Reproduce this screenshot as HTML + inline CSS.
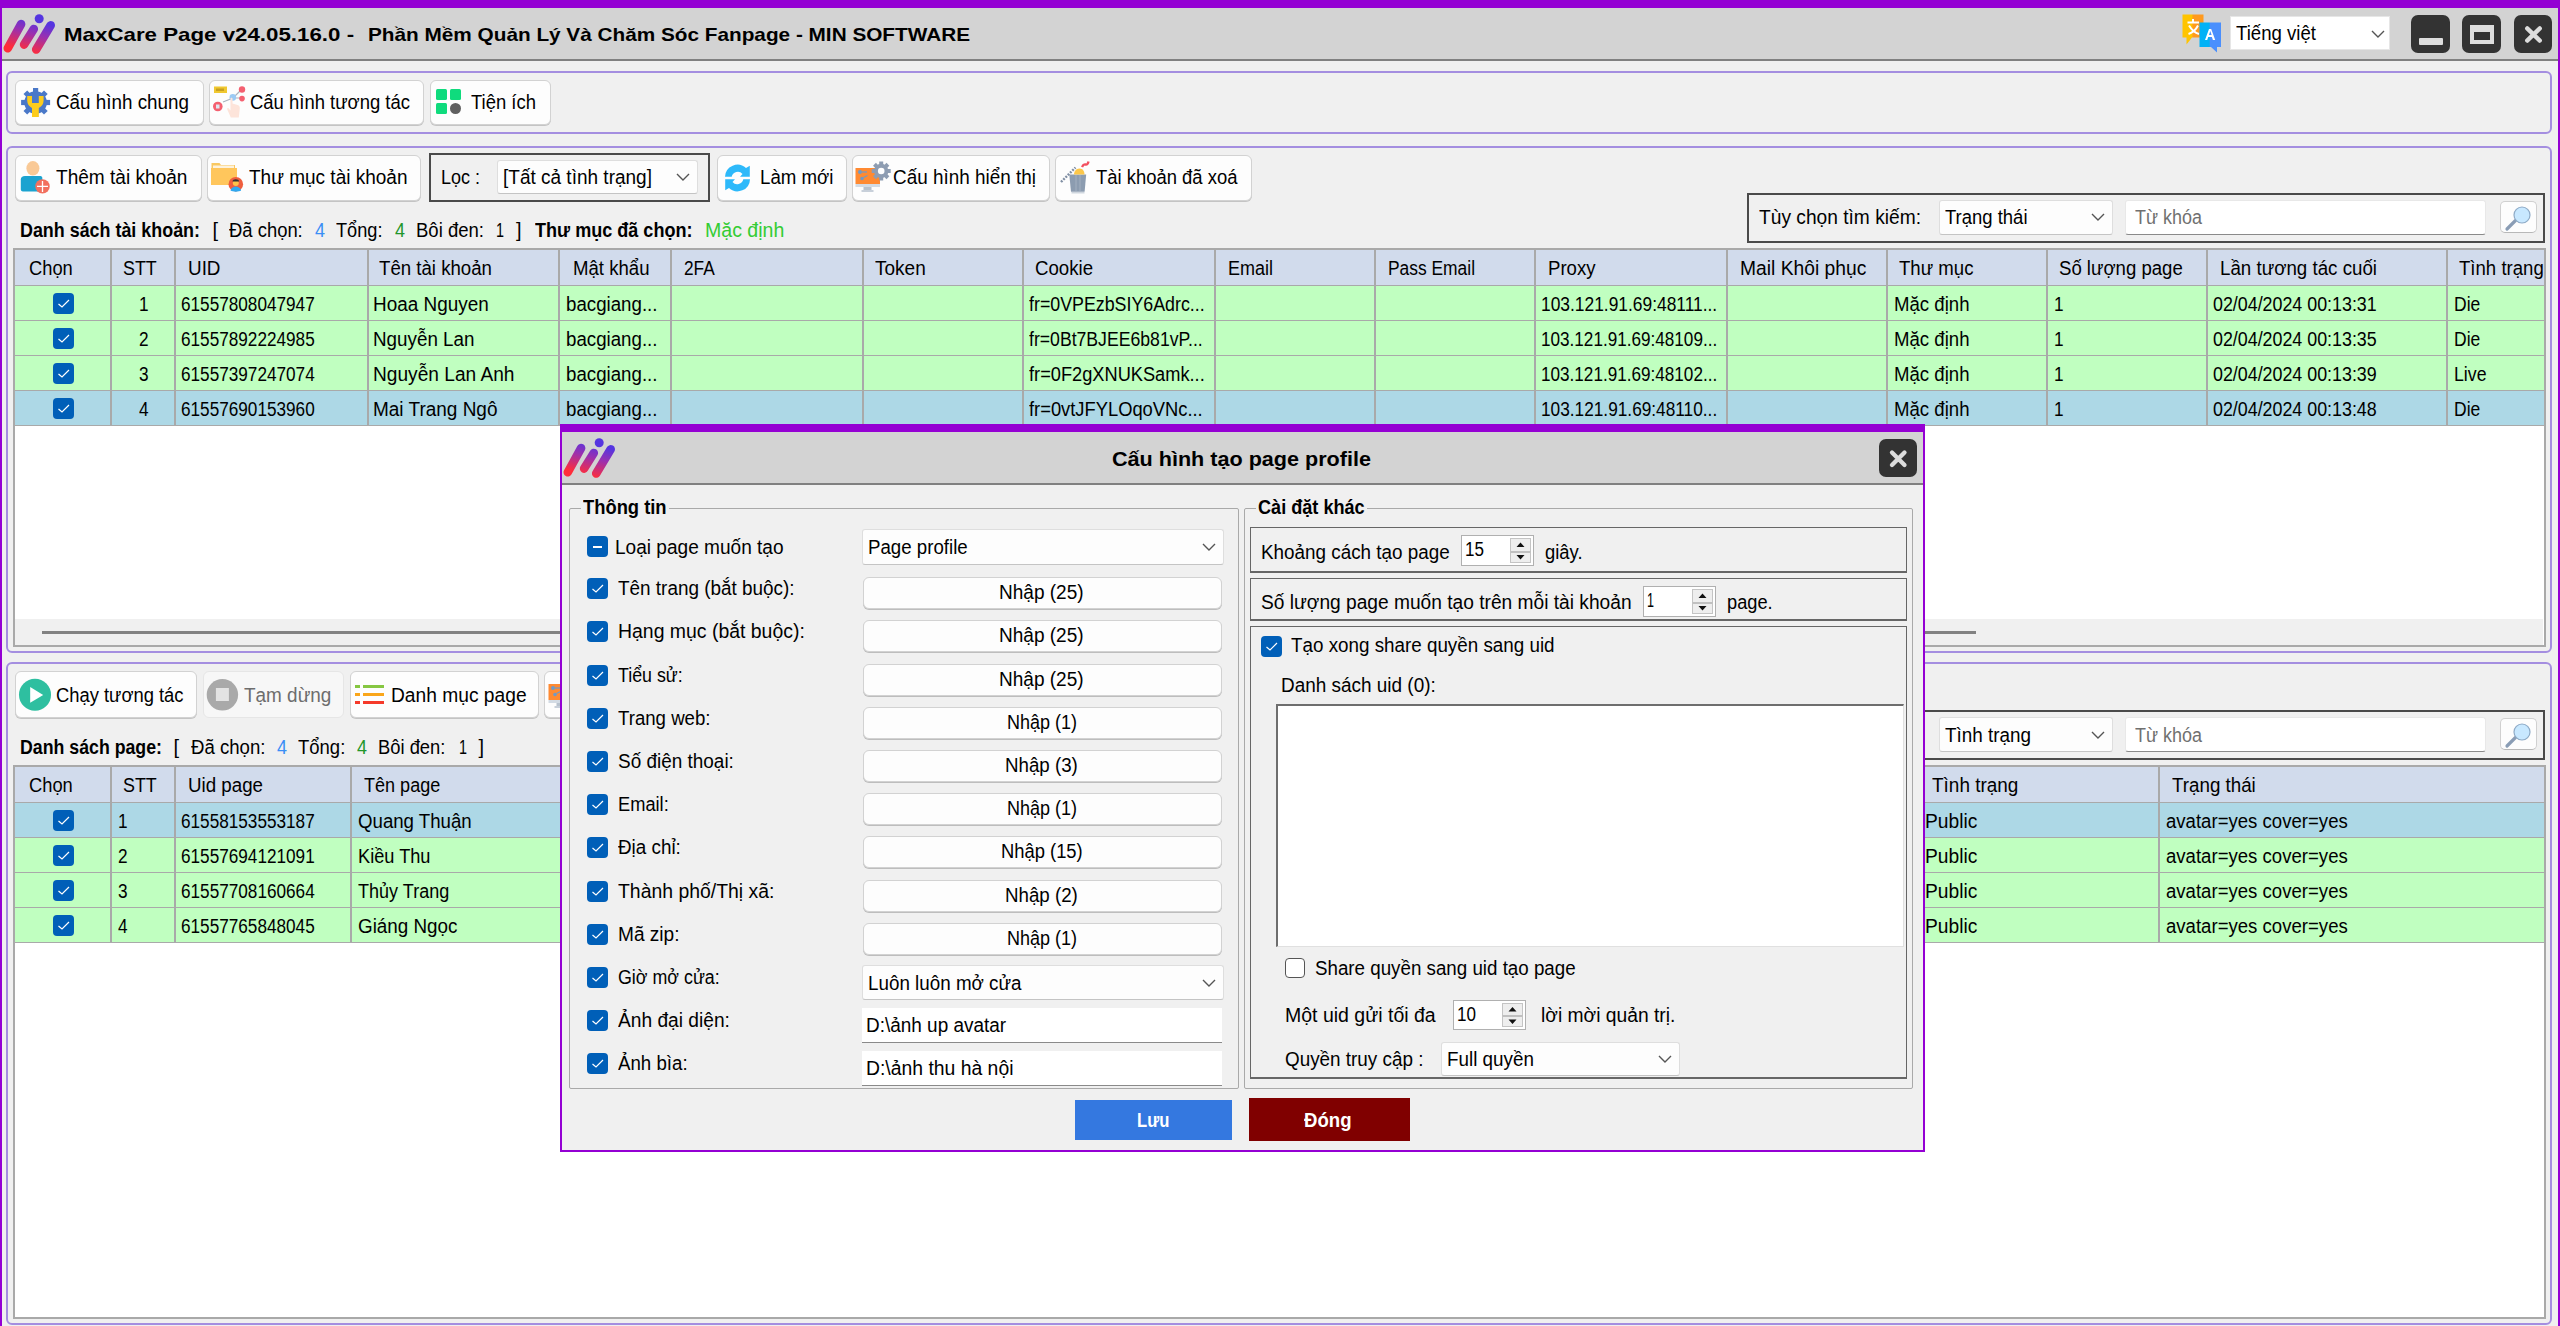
<!DOCTYPE html>
<html><head><meta charset="utf-8"><title>MaxCare Page</title>
<style>
html,body{margin:0;padding:0;width:2560px;height:1326px;overflow:hidden;background:#f0f0f0;position:relative}
body>div,body>svg{position:absolute}
.t{position:absolute;white-space:pre;line-height:1;font-family:"Liberation Sans",sans-serif;transform-origin:0 0}
</style></head><body>
<div style="left:2px;top:8px;width:2556px;height:51px;background:#d3d3d3"></div>
<div style="left:2px;top:59px;width:2556px;height:2px;background:#808080"></div>
<div style="left:0px;top:0px;width:2560px;height:8px;background:#9400d3"></div>
<div style="left:0px;top:0px;width:2px;height:1326px;background:#9400d3"></div>
<div style="left:2558px;top:0px;width:2px;height:1326px;background:#9400d3"></div>
<svg style="position:absolute;left:2px;top:14px;overflow:visible" width="54" height="40" viewBox="0 0 54 40"><defs><linearGradient id="lg1" gradientUnits="userSpaceOnUse" x1="20" y1="38" x2="30" y2="5"><stop offset="0.05" stop-color="#ff2d3a"/><stop offset="0.6" stop-color="#9a30b0"/><stop offset="1" stop-color="#5535e0"/></linearGradient></defs><g stroke="url(#lg1)" stroke-width="8.6" stroke-linecap="round" fill="none"><line x1="5.8" y1="34.3" x2="19.1" y2="10.1"/><line x1="22.1" y1="30.6" x2="31.8" y2="15"/><line x1="34.2" y1="35.5" x2="48.7" y2="11.3"/></g><circle cx="37.2" cy="4.7" r="4.5" fill="#5535e0"/></svg>
<div class="t" style="left:64.00px;top:24.85px;font-size:19px;font-weight:bold;color:#000;transform:scaleX(1.1736);">MaxCare Page v24.05.16.0 -</div>
<div class="t" style="left:368.00px;top:24.85px;font-size:19px;font-weight:bold;color:#000;transform:scaleX(1.0924);">Phần Mềm Quản Lý Và Chăm Sóc Fanpage - MIN SOFTWARE</div>
<svg style="position:absolute;left:2182px;top:14px;overflow:visible" width="40" height="40" viewBox="0 0 40 40"><defs><linearGradient id="tg1" x1="0" x2="1"><stop offset="0.45" stop-color="#ffc400"/><stop offset="0.5" stop-color="#ff9a1e"/></linearGradient><linearGradient id="tg2" x1="0" x2="1"><stop offset="0.45" stop-color="#00b2f6"/><stop offset="0.5" stop-color="#4a8ffd"/></linearGradient></defs><path d="M0.5 0.5h21v23h-11.5l-5.5 7v-7h-4z" fill="url(#tg1)"/><path d="M5.5 8.5h11.5M11 5v3.5M7 11.5c3 5 6 7.5 10 8.5M16 11.5c-2 4-5 7-9.5 8.5" stroke="#fff" stroke-width="2" fill="none"/><path d="M17.5 8.5h21.5v24.5h-4v5.5l-6-5.5h-11.5z" fill="url(#tg2)"/><path d="M23 26l4-11h2.2l4 11h-2.3l-1-3h-3.7l-1 3zM27 21h2.6l-1.3-4z" fill="#fff"/></svg>
<div style="left:2230px;top:16px;width:160px;height:34px;background:#fff;border:1px solid #e6e6e6;box-sizing:border-box"></div>
<div class="t" style="left:2236.25px;top:22.50px;font-size:20px;color:#000;transform:scaleX(0.9304);">Tiếng việt</div>
<svg style="position:absolute;left:2370px;top:28px;overflow:visible" width="16" height="12" viewBox="0 0 16 12"><path d="M2 3l6 6 6-6" stroke="#555" stroke-width="1.4" fill="none"/></svg>
<div style="left:2411px;top:15px;width:39px;height:38px;background:#333;border-radius:7px"></div>
<div style="left:2419px;top:38px;width:24px;height:7px;background:#ddd;border-radius:1px"></div>
<div style="left:2462px;top:15px;width:39px;height:38px;background:#333;border-radius:7px"></div>
<div style="left:2470px;top:25px;width:24px;height:19px;box-sizing:border-box;border:4px solid #ddd;border-top-width:7px"></div>
<div style="left:2514px;top:15px;width:38px;height:38px;background:#333;border-radius:7px"></div>
<svg style="position:absolute;left:2514px;top:15px;overflow:visible" width="38" height="38" viewBox="0 0 38 38"><path d="M13.2 13.4L25.8 25.6M25.8 13.4L13.2 25.6" stroke="#dcdcdc" stroke-width="4.3" stroke-linecap="round"/></svg>
<div style="left:6px;top:71px;width:2546px;height:63px;box-sizing:border-box;border:2px solid #a48ee0;border-radius:6px"></div>
<div style="left:15px;top:80px;width:189px;height:45px;background:#fdfdfd;border:1px solid #d2d2d2;box-sizing:border-box;border-radius:6px;box-shadow:0 1px 0 #c4c4c4;"></div>
<div style="left:209px;top:80px;width:215px;height:45px;background:#fdfdfd;border:1px solid #d2d2d2;box-sizing:border-box;border-radius:6px;box-shadow:0 1px 0 #c4c4c4;"></div>
<div style="left:430px;top:80px;width:121px;height:45px;background:#fdfdfd;border:1px solid #d2d2d2;box-sizing:border-box;border-radius:6px;box-shadow:0 1px 0 #c4c4c4;"></div>
<svg style="position:absolute;left:21px;top:88px;overflow:visible" width="30" height="30" viewBox="0 0 30 30"><g fill="#4a78c8"><circle cx="14.6" cy="14.5" r="11.3"/><rect x="12" y="0" width="5.2" height="6" transform="rotate(0 14.6 14.5)"/><rect x="12" y="0" width="5.2" height="6" transform="rotate(45 14.6 14.5)"/><rect x="12" y="0" width="5.2" height="6" transform="rotate(90 14.6 14.5)"/><rect x="12" y="0" width="5.2" height="6" transform="rotate(135 14.6 14.5)"/><rect x="12" y="0" width="5.2" height="6" transform="rotate(180 14.6 14.5)"/><rect x="12" y="0" width="5.2" height="6" transform="rotate(225 14.6 14.5)"/><rect x="12" y="0" width="5.2" height="6" transform="rotate(270 14.6 14.5)"/><rect x="12" y="0" width="5.2" height="6" transform="rotate(315 14.6 14.5)"/></g><path d="M6.2 8v4.5a8.4 8.4 0 0 0 4.8 7.4v9.1h6.8v-9.1a8.4 8.4 0 0 0 4.8-7.4v-4.5h-4.8v7h-6.8v-7z" fill="#fccc1c"/></svg>
<svg style="position:absolute;left:212px;top:85px;overflow:visible" width="34" height="34" viewBox="0 0 34 34"><path d="M11 17l10-4M21 13l9-9M21 13l9 0" stroke="#a9b3be" stroke-width="1.2" fill="none"/><rect x="2" y="1.5" width="13" height="6.5" fill="#f0c830"/><rect x="4" y="3.5" width="8" height="2.5" fill="#c8a020"/><circle cx="5.8" cy="21.5" r="4.8" fill="#f46070"/><rect x="4" y="19.5" width="3.5" height="4" fill="#dfe6f0"/><circle cx="30" cy="4.5" r="3.2" fill="#f46070"/><circle cx="30" cy="13.6" r="2.8" fill="#f46070"/><circle cx="20.8" cy="12.4" r="3.3" fill="#9ccaf4"/><path d="M18.5 13.5c0-1 2-1 2 0v5l5 1.5c2 0.5 2.5 2 2.3 3.5l-1 9h-8l-3.5-8c-0.5-1 0.5-2 1.5-1l1.7 2z" fill="#fde4da"/></svg>
<svg style="position:absolute;left:436px;top:89px;overflow:visible" width="30" height="30" viewBox="0 0 30 30"><rect x="0" y="0" width="11" height="11" rx="1.5" fill="#0fdb7d"/><rect x="14" y="0" width="11" height="11" rx="1.5" fill="#0fdb7d"/><rect x="0" y="14" width="11" height="11" rx="1.5" fill="#0fdb7d"/><circle cx="19.5" cy="19.5" r="5.5" fill="#606060"/></svg>
<div class="t" style="left:56.00px;top:91.75px;font-size:20px;color:#000;transform:scaleX(0.9416);">Cấu hình chung</div>
<div class="t" style="left:250.00px;top:91.75px;font-size:20px;color:#000;transform:scaleX(0.9232);">Cấu hình tương tác</div>
<div class="t" style="left:470.75px;top:91.75px;font-size:20px;color:#000;transform:scaleX(0.9230);">Tiện ích</div>
<div style="left:6px;top:146px;width:2546px;height:507px;box-sizing:border-box;border:2px solid #a48ee0;border-radius:6px"></div>
<div style="left:15px;top:154.5px;width:187px;height:46.5px;background:#fdfdfd;border:1px solid #d2d2d2;box-sizing:border-box;border-radius:6px;box-shadow:0 1px 0 #c4c4c4;"></div>
<div style="left:207px;top:154.5px;width:214px;height:46.5px;background:#fdfdfd;border:1px solid #d2d2d2;box-sizing:border-box;border-radius:6px;box-shadow:0 1px 0 #c4c4c4;"></div>
<div style="left:429px;top:153px;width:281px;height:49px;box-sizing:border-box;border:2px solid #4a4a4a"></div>
<div style="left:497px;top:160px;width:201px;height:34px;background:#fdfdfd;border:1px solid #dedede;box-sizing:border-box;border-radius:3px;border-bottom-color:#c4c4c4"></div>
<div class="t" style="left:503.00px;top:167.00px;font-size:20px;color:#000;transform:scaleX(0.9502);">[Tất cả tình trạng]</div>
<svg style="position:absolute;left:675px;top:171.0px;overflow:visible" width="16" height="12" viewBox="0 0 16 12"><path d="M2 3l6 6 6-6" stroke="#555" stroke-width="1.4" fill="none"/></svg>
<div style="left:717px;top:154.5px;width:130px;height:46.5px;background:#fdfdfd;border:1px solid #d2d2d2;box-sizing:border-box;border-radius:6px;box-shadow:0 1px 0 #c4c4c4;"></div>
<div style="left:852px;top:154.5px;width:198px;height:46.5px;background:#fdfdfd;border:1px solid #d2d2d2;box-sizing:border-box;border-radius:6px;box-shadow:0 1px 0 #c4c4c4;"></div>
<div style="left:1055px;top:154.5px;width:197px;height:46.5px;background:#fdfdfd;border:1px solid #d2d2d2;box-sizing:border-box;border-radius:6px;box-shadow:0 1px 0 #c4c4c4;"></div>
<div class="t" style="left:56.00px;top:167.00px;font-size:20px;color:#000;transform:scaleX(0.9538);">Thêm tài khoản</div>
<div class="t" style="left:249.00px;top:167.00px;font-size:20px;color:#000;transform:scaleX(0.9501);">Thư mục tài khoản</div>
<div class="t" style="left:441.00px;top:167.00px;font-size:20px;color:#000;transform:scaleX(0.8991);">Lọc :</div>
<div class="t" style="left:759.50px;top:167.00px;font-size:20px;color:#000;transform:scaleX(0.9343);">Làm mới</div>
<div class="t" style="left:893.00px;top:167.00px;font-size:20px;color:#000;transform:scaleX(0.9455);">Cấu hình hiển thị</div>
<div class="t" style="left:1096.00px;top:167.00px;font-size:20px;color:#000;transform:scaleX(0.9220);">Tài khoản đã xoá</div>
<svg style="position:absolute;left:16px;top:158px;overflow:visible" width="40" height="40" viewBox="0 0 40 40"><ellipse cx="16.9" cy="10.3" rx="6.5" ry="7.3" fill="#f9c996"/><path d="M9 18h15.5c1.2 0 1.8 1 1.8 2v13.5h-19.5c-1 0-2-1-2-2v-10c0-2 1.5-3.5 4.2-3.5z" fill="#1ba3d0"/><circle cx="26.5" cy="28.4" r="7.2" fill="#f2705e"/><path d="M26.5 23v11M21 28.4h11" stroke="#fff" stroke-width="1.3"/></svg>
<svg style="position:absolute;left:208px;top:158px;overflow:visible" width="40" height="40" viewBox="0 0 40 40"><path d="M3.5 5h8l1.5 2h14v4h-23.5z" fill="#f9c862"/><rect x="5" y="7.5" width="21" height="4" fill="#fdf2dc"/><rect x="3" y="10" width="26" height="17" fill="#ffc65c"/><circle cx="27.8" cy="26.2" r="7.3" fill="#ef5e3e"/><circle cx="27.8" cy="25" r="3" fill="#fcc24a"/><path d="M24.5 23.5c0-3 6.6-3 6.6 0z" fill="#333"/><path d="M22.5 32.5c1-3 3-4 5.3-4s4.3 1 5.3 4c-2 1.5-8.6 1.5-10.6 0z" fill="#2fa8f0"/></svg>
<svg style="position:absolute;left:718px;top:158px;overflow:visible" width="40" height="40" viewBox="0 0 40 40"><path d="M7 18.8a12.5 12.5 0 0 1 21-8.8l3.8-2.2v11h-9.8l2.5-2.8a6.2 6.2 0 0 0-10.8 2.8z" fill="#2db9fa"/><path d="M32 21.2a12.5 12.5 0 0 1-21 8.8l-3.8 2.2v-11h9.8l-2.5 2.8a6.2 6.2 0 0 0 10.8-2.8z" fill="#2db9fa"/></svg>
<svg style="position:absolute;left:855px;top:156px;overflow:visible" width="40" height="40" viewBox="0 0 40 40"><rect x="0.5" y="12" width="24.5" height="16" fill="#ff8a32"/><rect x="0.5" y="28" width="24.5" height="3" fill="#d3dbe4"/><rect x="8.5" y="31" width="8" height="3" fill="#b8c2ce"/><rect x="6.5" y="34" width="12" height="2" fill="#c8d0da"/><circle cx="5" cy="16" r="2" fill="#6f9ac8"/><path d="M7 16h5" stroke="#6f9ac8" stroke-width="1.2"/><circle cx="7" cy="22.5" r="1.8" fill="#6f9ac8"/><path d="M8.5 21.5l4-2" stroke="#6f9ac8" stroke-width="1.2"/><g fill="#8e9db2"><rect x="24.2" y="5.5" width="4" height="5" transform="rotate(0 26.2 15)"/><rect x="24.2" y="5.5" width="4" height="5" transform="rotate(45 26.2 15)"/><rect x="24.2" y="5.5" width="4" height="5" transform="rotate(90 26.2 15)"/><rect x="24.2" y="5.5" width="4" height="5" transform="rotate(135 26.2 15)"/><rect x="24.2" y="5.5" width="4" height="5" transform="rotate(180 26.2 15)"/><rect x="24.2" y="5.5" width="4" height="5" transform="rotate(225 26.2 15)"/><rect x="24.2" y="5.5" width="4" height="5" transform="rotate(270 26.2 15)"/><rect x="24.2" y="5.5" width="4" height="5" transform="rotate(315 26.2 15)"/><circle cx="26.2" cy="15" r="7.2"/></g><circle cx="26.2" cy="15" r="3.3" fill="#fff"/></svg>
<svg style="position:absolute;left:1056px;top:156px;overflow:visible" width="44" height="44" viewBox="0 0 44 44"><path d="M13.3 18.5h16.9l-1.6 17.3h-13.6z" fill="#8c9cb0"/><path d="M15.5 36h13v1.5h-13z" fill="#cfd6de"/><path d="M20 19v16M24 19v16" stroke="#a3b0c0" stroke-width="1"/><path d="M5 26l14.5-14.5" stroke="#7f8ea3" stroke-width="2.4" stroke-dasharray="2 1.2"/><path d="M18 18.5c0-3 2-6 5.5-6s5 3 5 6z" fill="#fcc74a"/><path d="M26 11c1-2 2-3 3.5-2.5s2.5-1 3-3" stroke="#f25060" stroke-width="2.4" fill="none"/></svg>
<div class="t" style="left:20.00px;top:219.60px;font-size:20px;font-weight:bold;color:#000;transform:scaleX(0.8947);">Danh sách tài khoản:</div>
<div class="t" style="left:212.50px;top:219.60px;font-size:20px;color:#000;">[</div>
<div class="t" style="left:228.75px;top:219.60px;font-size:20px;color:#000;transform:scaleX(0.9212);">Đã chọn:</div>
<div class="t" style="left:315.00px;top:219.60px;font-size:20px;color:#3a8ef6;transform:scaleX(0.8989);">4</div>
<div class="t" style="left:336.00px;top:219.60px;font-size:20px;color:#000;transform:scaleX(0.9090);">Tổng:</div>
<div class="t" style="left:395.00px;top:219.60px;font-size:20px;color:#22962a;transform:scaleX(0.8989);">4</div>
<div class="t" style="left:416.00px;top:219.60px;font-size:20px;color:#000;transform:scaleX(0.9264);">Bôi đen:</div>
<div class="t" style="left:496.00px;top:219.60px;font-size:20px;color:#000;transform:scaleX(0.7191);">1</div>
<div class="t" style="left:516.00px;top:219.60px;font-size:20px;color:#000;">]</div>
<div class="t" style="left:535.00px;top:219.60px;font-size:20px;font-weight:bold;color:#000;transform:scaleX(0.9025);">Thư mục đã chọn:</div>
<div class="t" style="left:704.50px;top:219.60px;font-size:20px;color:#33cc33;transform:scaleX(0.9765);">Mặc định</div>
<div style="left:1747px;top:192.5px;width:798px;height:50px;box-sizing:border-box;border:2px solid #4a4a4a"></div>
<div style="left:1939px;top:199.5px;width:174px;height:35px;background:#fdfdfd;border:1px solid #dedede;box-sizing:border-box;border-radius:3px;border-bottom-color:#c4c4c4"></div>
<div class="t" style="left:1944.50px;top:207.00px;font-size:20px;color:#000;transform:scaleX(0.9236);">Trạng thái</div>
<svg style="position:absolute;left:2090px;top:211.0px;overflow:visible" width="16" height="12" viewBox="0 0 16 12"><path d="M2 3l6 6 6-6" stroke="#555" stroke-width="1.4" fill="none"/></svg>
<div style="left:2125px;top:199.5px;width:361px;height:35px;background:#fff;border:1px solid #e8e8e8;box-sizing:border-box;border-radius:3px;border-bottom:1.5px solid #8a8a8a"></div>
<div class="t" style="left:2135.00px;top:207.00px;font-size:20px;color:#707070;transform:scaleX(0.8988);">Từ khóa</div>
<div style="left:2500px;top:200.5px;width:37px;height:32px;background:#fdfdfd;border:1.5px solid #d0d0d0;box-sizing:border-box;border-radius:5px;border-bottom-color:#b8b8b8"></div>
<svg style="position:absolute;left:2500px;top:200.5px;overflow:visible" width="37" height="32" viewBox="0 0 37 32"><path d="M7 28l8.5-8.5" stroke="#8a9db5" stroke-width="3.2" stroke-linecap="round"/><circle cx="22" cy="14" r="8" fill="#c8e8ff" stroke="#8eaac6" stroke-width="1.2"/></svg>
<div class="t" style="left:1758.75px;top:207.00px;font-size:20px;color:#000;transform:scaleX(0.9588);">Tùy chọn tìm kiếm:</div>
<div style="left:13px;top:248px;width:2533px;height:399px;background:#fff;box-sizing:border-box;border:2px solid #a9a9a9"></div>
<div style="left:15px;top:250px;width:2529px;height:34.5px;background:#d1dbec"></div>
<div style="left:15px;top:284.5px;width:2529px;height:1.5px;background:#a9a9a9"></div>
<div style="left:15px;top:286px;width:2529px;height:35px;background:#c0ffc0"></div>
<div style="left:15px;top:319.5px;width:2529px;height:1.8px;background:#a9a9a9"></div>
<div style="left:15px;top:321px;width:2529px;height:35px;background:#c0ffc0"></div>
<div style="left:15px;top:354.5px;width:2529px;height:1.8px;background:#a9a9a9"></div>
<div style="left:15px;top:356px;width:2529px;height:35px;background:#c0ffc0"></div>
<div style="left:15px;top:389.5px;width:2529px;height:1.8px;background:#a9a9a9"></div>
<div style="left:15px;top:391px;width:2529px;height:35px;background:#add8e6"></div>
<div style="left:15px;top:424.5px;width:2529px;height:1.8px;background:#a9a9a9"></div>
<div style="left:110px;top:250px;width:2px;height:176px;background:#a9a9a9"></div>
<div style="left:174px;top:250px;width:2px;height:176px;background:#a9a9a9"></div>
<div style="left:366.5px;top:250px;width:2px;height:176px;background:#a9a9a9"></div>
<div style="left:558px;top:250px;width:2px;height:176px;background:#a9a9a9"></div>
<div style="left:670px;top:250px;width:2px;height:176px;background:#a9a9a9"></div>
<div style="left:862px;top:250px;width:2px;height:176px;background:#a9a9a9"></div>
<div style="left:1022px;top:250px;width:2px;height:176px;background:#a9a9a9"></div>
<div style="left:1214px;top:250px;width:2px;height:176px;background:#a9a9a9"></div>
<div style="left:1374px;top:250px;width:2px;height:176px;background:#a9a9a9"></div>
<div style="left:1534px;top:250px;width:2px;height:176px;background:#a9a9a9"></div>
<div style="left:1726px;top:250px;width:2px;height:176px;background:#a9a9a9"></div>
<div style="left:1886px;top:250px;width:2px;height:176px;background:#a9a9a9"></div>
<div style="left:2046px;top:250px;width:2px;height:176px;background:#a9a9a9"></div>
<div style="left:2206px;top:250px;width:2px;height:176px;background:#a9a9a9"></div>
<div style="left:2446px;top:250px;width:2px;height:176px;background:#a9a9a9"></div>
<div class="t" style="left:28.75px;top:258.00px;font-size:20px;color:#000;transform:scaleX(0.9150);">Chọn</div>
<div class="t" style="left:122.50px;top:258.00px;font-size:20px;color:#000;transform:scaleX(0.8933);">STT</div>
<div class="t" style="left:187.50px;top:258.00px;font-size:20px;color:#000;transform:scaleX(0.9437);">UID</div>
<div class="t" style="left:378.75px;top:258.00px;font-size:20px;color:#000;transform:scaleX(0.9322);">Tên tài khoản</div>
<div class="t" style="left:572.50px;top:258.00px;font-size:20px;color:#000;transform:scaleX(0.9300);">Mật khẩu</div>
<div class="t" style="left:683.75px;top:258.00px;font-size:20px;color:#000;transform:scaleX(0.8643);">2FA</div>
<div class="t" style="left:875.00px;top:258.00px;font-size:20px;color:#000;transform:scaleX(0.9508);">Token</div>
<div class="t" style="left:1035.00px;top:258.00px;font-size:20px;color:#000;transform:scaleX(0.9317);">Cookie</div>
<div class="t" style="left:1227.50px;top:258.00px;font-size:20px;color:#000;transform:scaleX(0.9000);">Email</div>
<div class="t" style="left:1387.50px;top:258.00px;font-size:20px;color:#000;transform:scaleX(0.8697);">Pass Email</div>
<div class="t" style="left:1547.50px;top:258.00px;font-size:20px;color:#000;transform:scaleX(0.9291);">Proxy</div>
<div class="t" style="left:1740.00px;top:258.00px;font-size:20px;color:#000;transform:scaleX(0.9624);">Mail Khôi phục</div>
<div class="t" style="left:1899.00px;top:258.00px;font-size:20px;color:#000;transform:scaleX(0.9300);">Thư mục</div>
<div class="t" style="left:2058.75px;top:258.00px;font-size:20px;color:#000;transform:scaleX(0.9285);">Số lượng page</div>
<div class="t" style="left:2220.00px;top:258.00px;font-size:20px;color:#000;transform:scaleX(0.9359);">Lần tương tác cuối</div>
<div class="t" style="left:2459.00px;top:258.00px;font-size:20px;color:#000;transform:scaleX(0.9300);">Tình trạng</div>
<div style="left:53px;top:293px;width:21px;height:21px;background:#005fb8;border-radius:4px"></div>
<svg style="position:absolute;left:53px;top:293px;overflow:visible" width="21" height="21" viewBox="0 0 21 21"><path d="M5.5 11l3.5 3 7-7" stroke="#fff" stroke-width="1.2" fill="none"/></svg>
<div class="t" style="left:138.75px;top:293.50px;font-size:20px;color:#000;transform:scaleX(0.8600);">1</div>
<div class="t" style="left:181.25px;top:293.50px;font-size:20px;color:#000;transform:scaleX(0.8587);">61557808047947</div>
<div class="t" style="left:373.00px;top:293.50px;font-size:20px;color:#000;transform:scaleX(0.9463);">Hoaa Nguyen</div>
<div class="t" style="left:565.50px;top:293.50px;font-size:20px;color:#000;transform:scaleX(0.9349);">bacgiang...</div>
<div class="t" style="left:1028.75px;top:293.50px;font-size:20px;color:#000;transform:scaleX(0.8904);">fr=0VPEzbSIY6Adrc...</div>
<div class="t" style="left:1541.25px;top:293.50px;font-size:20px;color:#000;transform:scaleX(0.8689);">103.121.91.69:48111...</div>
<div class="t" style="left:1894.00px;top:293.50px;font-size:20px;color:#000;transform:scaleX(0.9300);">Mặc định</div>
<div class="t" style="left:2053.75px;top:293.50px;font-size:20px;color:#000;transform:scaleX(0.8600);">1</div>
<div class="t" style="left:2212.50px;top:293.50px;font-size:20px;color:#000;transform:scaleX(0.8921);">02/04/2024 00:13:31</div>
<div class="t" style="left:2453.75px;top:293.50px;font-size:20px;color:#000;transform:scaleX(0.8750);">Die</div>
<div style="left:53px;top:328px;width:21px;height:21px;background:#005fb8;border-radius:4px"></div>
<svg style="position:absolute;left:53px;top:328px;overflow:visible" width="21" height="21" viewBox="0 0 21 21"><path d="M5.5 11l3.5 3 7-7" stroke="#fff" stroke-width="1.2" fill="none"/></svg>
<div class="t" style="left:138.75px;top:328.50px;font-size:20px;color:#000;transform:scaleX(0.8600);">2</div>
<div class="t" style="left:181.25px;top:328.50px;font-size:20px;color:#000;transform:scaleX(0.8587);">61557892224985</div>
<div class="t" style="left:373.00px;top:328.50px;font-size:20px;color:#000;transform:scaleX(0.9409);">Nguyễn Lan</div>
<div class="t" style="left:565.50px;top:328.50px;font-size:20px;color:#000;transform:scaleX(0.9349);">bacgiang...</div>
<div class="t" style="left:1028.75px;top:328.50px;font-size:20px;color:#000;transform:scaleX(0.8818);">fr=0Bt7BJEE6b81vP...</div>
<div class="t" style="left:1541.25px;top:328.50px;font-size:20px;color:#000;transform:scaleX(0.8564);">103.121.91.69:48109...</div>
<div class="t" style="left:1894.00px;top:328.50px;font-size:20px;color:#000;transform:scaleX(0.9300);">Mặc định</div>
<div class="t" style="left:2053.75px;top:328.50px;font-size:20px;color:#000;transform:scaleX(0.8600);">1</div>
<div class="t" style="left:2212.50px;top:328.50px;font-size:20px;color:#000;transform:scaleX(0.8921);">02/04/2024 00:13:35</div>
<div class="t" style="left:2453.75px;top:328.50px;font-size:20px;color:#000;transform:scaleX(0.8750);">Die</div>
<div style="left:53px;top:363px;width:21px;height:21px;background:#005fb8;border-radius:4px"></div>
<svg style="position:absolute;left:53px;top:363px;overflow:visible" width="21" height="21" viewBox="0 0 21 21"><path d="M5.5 11l3.5 3 7-7" stroke="#fff" stroke-width="1.2" fill="none"/></svg>
<div class="t" style="left:138.75px;top:363.50px;font-size:20px;color:#000;transform:scaleX(0.8600);">3</div>
<div class="t" style="left:181.25px;top:363.50px;font-size:20px;color:#000;transform:scaleX(0.8587);">61557397247074</div>
<div class="t" style="left:373.00px;top:363.50px;font-size:20px;color:#000;transform:scaleX(0.9566);">Nguyễn Lan Anh</div>
<div class="t" style="left:565.50px;top:363.50px;font-size:20px;color:#000;transform:scaleX(0.9349);">bacgiang...</div>
<div class="t" style="left:1028.75px;top:363.50px;font-size:20px;color:#000;transform:scaleX(0.9112);">fr=0F2gXNUKSamk...</div>
<div class="t" style="left:1541.25px;top:363.50px;font-size:20px;color:#000;transform:scaleX(0.8564);">103.121.91.69:48102...</div>
<div class="t" style="left:1894.00px;top:363.50px;font-size:20px;color:#000;transform:scaleX(0.9300);">Mặc định</div>
<div class="t" style="left:2053.75px;top:363.50px;font-size:20px;color:#000;transform:scaleX(0.8600);">1</div>
<div class="t" style="left:2212.50px;top:363.50px;font-size:20px;color:#000;transform:scaleX(0.8921);">02/04/2024 00:13:39</div>
<div class="t" style="left:2453.75px;top:363.50px;font-size:20px;color:#000;transform:scaleX(0.8859);">Live</div>
<div style="left:53px;top:398px;width:21px;height:21px;background:#005fb8;border-radius:4px"></div>
<svg style="position:absolute;left:53px;top:398px;overflow:visible" width="21" height="21" viewBox="0 0 21 21"><path d="M5.5 11l3.5 3 7-7" stroke="#fff" stroke-width="1.2" fill="none"/></svg>
<div class="t" style="left:138.75px;top:398.50px;font-size:20px;color:#000;transform:scaleX(0.8600);">4</div>
<div class="t" style="left:181.25px;top:398.50px;font-size:20px;color:#000;transform:scaleX(0.8587);">61557690153960</div>
<div class="t" style="left:373.00px;top:398.50px;font-size:20px;color:#000;transform:scaleX(0.9490);">Mai Trang Ngô</div>
<div class="t" style="left:565.50px;top:398.50px;font-size:20px;color:#000;transform:scaleX(0.9349);">bacgiang...</div>
<div class="t" style="left:1028.75px;top:398.50px;font-size:20px;color:#000;transform:scaleX(0.9166);">fr=0vtJFYLOqoVNc...</div>
<div class="t" style="left:1541.25px;top:398.50px;font-size:20px;color:#000;transform:scaleX(0.8626);">103.121.91.69:48110...</div>
<div class="t" style="left:1894.00px;top:398.50px;font-size:20px;color:#000;transform:scaleX(0.9300);">Mặc định</div>
<div class="t" style="left:2053.75px;top:398.50px;font-size:20px;color:#000;transform:scaleX(0.8600);">1</div>
<div class="t" style="left:2212.50px;top:398.50px;font-size:20px;color:#000;transform:scaleX(0.8921);">02/04/2024 00:13:48</div>
<div class="t" style="left:2453.75px;top:398.50px;font-size:20px;color:#000;transform:scaleX(0.8750);">Die</div>
<div style="left:15px;top:619.3px;width:2528px;height:26px;background:#f0f0f0"></div>
<div style="left:41.5px;top:630.6px;width:1934.5px;height:3.2px;background:#828282"></div>
<div style="left:6px;top:662px;width:2546px;height:663px;box-sizing:border-box;border:2px solid #a48ee0;border-radius:6px"></div>
<div style="left:15px;top:671px;width:182px;height:47px;background:#fdfdfd;border:1px solid #d2d2d2;box-sizing:border-box;border-radius:6px;box-shadow:0 1px 0 #c4c4c4;"></div>
<div style="left:203px;top:671px;width:141px;height:47px;background:#fdfdfd;border:1px solid #d2d2d2;box-sizing:border-box;border-radius:6px;box-shadow:0 1px 0 #c4c4c4;background:#f7f7f7;border-color:#e6e6e6;box-shadow:none"></div>
<div style="left:350px;top:671px;width:189px;height:47px;background:#fdfdfd;border:1px solid #d2d2d2;box-sizing:border-box;border-radius:6px;box-shadow:0 1px 0 #c4c4c4;"></div>
<div style="left:544px;top:671px;width:200px;height:47px;background:#fdfdfd;border:1px solid #d2d2d2;box-sizing:border-box;border-radius:6px;box-shadow:0 1px 0 #c4c4c4;"></div>
<div class="t" style="left:55.90px;top:685.30px;font-size:20px;color:#000;transform:scaleX(0.9185);">Chạy tương tác</div>
<div class="t" style="left:243.60px;top:685.30px;font-size:20px;color:#6d6d6d;transform:scaleX(0.9466);">Tạm dừng</div>
<div class="t" style="left:391.20px;top:685.30px;font-size:20px;color:#000;transform:scaleX(0.9602);">Danh mục page</div>
<svg style="position:absolute;left:16px;top:674px;overflow:visible" width="40" height="40" viewBox="0 0 40 40"><circle cx="19" cy="20.8" r="16" fill="#2ebfa0"/><path d="M14.2 13v15.7l13-7.8z" fill="#fff"/></svg>
<svg style="position:absolute;left:204px;top:674px;overflow:visible" width="40" height="40" viewBox="0 0 40 40"><circle cx="18.4" cy="20.8" r="15.7" fill="#a9a9a9"/><rect x="11.9" y="14" width="13" height="13" fill="#e3e3e3"/></svg>
<svg style="position:absolute;left:350px;top:674px;overflow:visible" width="40" height="40" viewBox="0 0 40 40"><rect x="5" y="11" width="5" height="3" fill="#86c742"/><rect x="13" y="11" width="21" height="3" fill="#86c742"/><rect x="5" y="19" width="5" height="3" fill="#faa61a"/><rect x="13" y="19" width="21" height="3" fill="#faa61a"/><rect x="5" y="27" width="5" height="3" fill="#f53a2a"/><rect x="13" y="27" width="21" height="3" fill="#f53a2a"/></svg>
<svg style="position:absolute;left:548px;top:672px;overflow:visible" width="40" height="40" viewBox="0 0 40 40"><rect x="0.5" y="12" width="24.5" height="16" fill="#ff8a32"/><rect x="0.5" y="28" width="24.5" height="3" fill="#d3dbe4"/><rect x="8.5" y="31" width="8" height="3" fill="#b8c2ce"/><rect x="6.5" y="34" width="12" height="2" fill="#c8d0da"/><circle cx="5" cy="16" r="2" fill="#6f9ac8"/><path d="M7 16h5" stroke="#6f9ac8" stroke-width="1.2"/><circle cx="7" cy="22.5" r="1.8" fill="#6f9ac8"/><path d="M8.5 21.5l4-2" stroke="#6f9ac8" stroke-width="1.2"/><g fill="#8e9db2"><rect x="24.2" y="5.5" width="4" height="5" transform="rotate(0 26.2 15)"/><rect x="24.2" y="5.5" width="4" height="5" transform="rotate(45 26.2 15)"/><rect x="24.2" y="5.5" width="4" height="5" transform="rotate(90 26.2 15)"/><rect x="24.2" y="5.5" width="4" height="5" transform="rotate(135 26.2 15)"/><rect x="24.2" y="5.5" width="4" height="5" transform="rotate(180 26.2 15)"/><rect x="24.2" y="5.5" width="4" height="5" transform="rotate(225 26.2 15)"/><rect x="24.2" y="5.5" width="4" height="5" transform="rotate(270 26.2 15)"/><rect x="24.2" y="5.5" width="4" height="5" transform="rotate(315 26.2 15)"/><circle cx="26.2" cy="15" r="7.2"/></g><circle cx="26.2" cy="15" r="3.3" fill="#fff"/></svg>
<div class="t" style="left:20.00px;top:737.30px;font-size:20px;font-weight:bold;color:#000;transform:scaleX(0.8872);">Danh sách page:</div>
<div class="t" style="left:173.40px;top:737.30px;font-size:20px;color:#000;">[</div>
<div class="t" style="left:190.60px;top:737.30px;font-size:20px;color:#000;transform:scaleX(0.9305);">Đã chọn:</div>
<div class="t" style="left:276.60px;top:737.30px;font-size:20px;color:#3a8ef6;transform:scaleX(0.8989);">4</div>
<div class="t" style="left:298.00px;top:737.30px;font-size:20px;color:#000;transform:scaleX(0.9246);">Tổng:</div>
<div class="t" style="left:356.80px;top:737.30px;font-size:20px;color:#22962a;transform:scaleX(0.8989);">4</div>
<div class="t" style="left:378.30px;top:737.30px;font-size:20px;color:#000;transform:scaleX(0.9182);">Bôi đen:</div>
<div class="t" style="left:458.60px;top:737.30px;font-size:20px;color:#000;transform:scaleX(0.7191);">1</div>
<div class="t" style="left:478.60px;top:737.30px;font-size:20px;color:#000;">]</div>
<div style="left:1747px;top:710px;width:798px;height:50px;box-sizing:border-box;border:2px solid #4a4a4a"></div>
<div style="left:1939px;top:717px;width:174px;height:35px;background:#fdfdfd;border:1px solid #dedede;box-sizing:border-box;border-radius:3px;border-bottom-color:#c4c4c4"></div>
<div class="t" style="left:1944.50px;top:724.50px;font-size:20px;color:#000;transform:scaleX(0.9431);">Tình trạng</div>
<svg style="position:absolute;left:2090px;top:728.5px;overflow:visible" width="16" height="12" viewBox="0 0 16 12"><path d="M2 3l6 6 6-6" stroke="#555" stroke-width="1.4" fill="none"/></svg>
<div style="left:2125px;top:717px;width:361px;height:35px;background:#fff;border:1px solid #e8e8e8;box-sizing:border-box;border-radius:3px;border-bottom:1.5px solid #8a8a8a"></div>
<div class="t" style="left:2135.00px;top:724.50px;font-size:20px;color:#707070;transform:scaleX(0.8988);">Từ khóa</div>
<div style="left:2500px;top:718px;width:37px;height:32px;background:#fdfdfd;border:1.5px solid #d0d0d0;box-sizing:border-box;border-radius:5px;border-bottom-color:#b8b8b8"></div>
<svg style="position:absolute;left:2500px;top:718px;overflow:visible" width="37" height="32" viewBox="0 0 37 32"><path d="M7 28l8.5-8.5" stroke="#8a9db5" stroke-width="3.2" stroke-linecap="round"/><circle cx="22" cy="14" r="8" fill="#c8e8ff" stroke="#8eaac6" stroke-width="1.2"/></svg>
<div style="left:13px;top:765px;width:2533px;height:554px;background:#fff;box-sizing:border-box;border:2px solid #a9a9a9"></div>
<div style="left:15px;top:767px;width:2529px;height:34.5px;background:#d1dbec"></div>
<div style="left:15px;top:801.5px;width:2529px;height:1.5px;background:#a9a9a9"></div>
<div style="left:15px;top:803px;width:2529px;height:35px;background:#add8e6"></div>
<div style="left:15px;top:836.5px;width:2529px;height:1.8px;background:#a9a9a9"></div>
<div style="left:15px;top:838px;width:2529px;height:35px;background:#c0ffc0"></div>
<div style="left:15px;top:871.5px;width:2529px;height:1.8px;background:#a9a9a9"></div>
<div style="left:15px;top:873px;width:2529px;height:35px;background:#c0ffc0"></div>
<div style="left:15px;top:906.5px;width:2529px;height:1.8px;background:#a9a9a9"></div>
<div style="left:15px;top:908px;width:2529px;height:35px;background:#c0ffc0"></div>
<div style="left:15px;top:941.5px;width:2529px;height:1.8px;background:#a9a9a9"></div>
<div style="left:110px;top:767px;width:2px;height:176px;background:#a9a9a9"></div>
<div style="left:174px;top:767px;width:2px;height:176px;background:#a9a9a9"></div>
<div style="left:350px;top:767px;width:2px;height:176px;background:#a9a9a9"></div>
<div style="left:1919px;top:767px;width:2px;height:176px;background:#a9a9a9"></div>
<div style="left:2158px;top:767px;width:2px;height:176px;background:#a9a9a9"></div>
<div class="t" style="left:28.75px;top:775.00px;font-size:20px;color:#000;transform:scaleX(0.9150);">Chọn</div>
<div class="t" style="left:122.50px;top:775.00px;font-size:20px;color:#000;transform:scaleX(0.8933);">STT</div>
<div class="t" style="left:187.50px;top:775.00px;font-size:20px;color:#000;transform:scaleX(0.9368);">Uid page</div>
<div class="t" style="left:363.75px;top:775.00px;font-size:20px;color:#000;transform:scaleX(0.9020);">Tên page</div>
<div class="t" style="left:1932.20px;top:775.00px;font-size:20px;color:#000;transform:scaleX(0.9475);">Tình trạng</div>
<div class="t" style="left:2172.00px;top:775.00px;font-size:20px;color:#000;transform:scaleX(0.9381);">Trạng thái</div>
<div style="left:53px;top:810px;width:21px;height:21px;background:#005fb8;border-radius:4px"></div>
<svg style="position:absolute;left:53px;top:810px;overflow:visible" width="21" height="21" viewBox="0 0 21 21"><path d="M5.5 11l3.5 3 7-7" stroke="#fff" stroke-width="1.2" fill="none"/></svg>
<div class="t" style="left:117.50px;top:810.50px;font-size:20px;color:#000;transform:scaleX(0.8600);">1</div>
<div class="t" style="left:181.25px;top:810.50px;font-size:20px;color:#000;transform:scaleX(0.8587);">61558153553187</div>
<div class="t" style="left:357.50px;top:810.50px;font-size:20px;color:#000;transform:scaleX(0.9325);">Quang Thuận</div>
<div class="t" style="left:1925.00px;top:810.50px;font-size:20px;color:#000;transform:scaleX(0.9602);">Public</div>
<div class="t" style="left:2165.50px;top:810.50px;font-size:20px;color:#000;transform:scaleX(0.9290);">avatar=yes cover=yes</div>
<div style="left:53px;top:845px;width:21px;height:21px;background:#005fb8;border-radius:4px"></div>
<svg style="position:absolute;left:53px;top:845px;overflow:visible" width="21" height="21" viewBox="0 0 21 21"><path d="M5.5 11l3.5 3 7-7" stroke="#fff" stroke-width="1.2" fill="none"/></svg>
<div class="t" style="left:117.50px;top:845.50px;font-size:20px;color:#000;transform:scaleX(0.8600);">2</div>
<div class="t" style="left:181.25px;top:845.50px;font-size:20px;color:#000;transform:scaleX(0.8587);">61557694121091</div>
<div class="t" style="left:357.50px;top:845.50px;font-size:20px;color:#000;transform:scaleX(0.9096);">Kiều Thu</div>
<div class="t" style="left:1925.00px;top:845.50px;font-size:20px;color:#000;transform:scaleX(0.9602);">Public</div>
<div class="t" style="left:2165.50px;top:845.50px;font-size:20px;color:#000;transform:scaleX(0.9290);">avatar=yes cover=yes</div>
<div style="left:53px;top:880px;width:21px;height:21px;background:#005fb8;border-radius:4px"></div>
<svg style="position:absolute;left:53px;top:880px;overflow:visible" width="21" height="21" viewBox="0 0 21 21"><path d="M5.5 11l3.5 3 7-7" stroke="#fff" stroke-width="1.2" fill="none"/></svg>
<div class="t" style="left:117.50px;top:880.50px;font-size:20px;color:#000;transform:scaleX(0.8600);">3</div>
<div class="t" style="left:181.25px;top:880.50px;font-size:20px;color:#000;transform:scaleX(0.8587);">61557708160664</div>
<div class="t" style="left:357.50px;top:880.50px;font-size:20px;color:#000;transform:scaleX(0.9018);">Thủy Trang</div>
<div class="t" style="left:1925.00px;top:880.50px;font-size:20px;color:#000;transform:scaleX(0.9602);">Public</div>
<div class="t" style="left:2165.50px;top:880.50px;font-size:20px;color:#000;transform:scaleX(0.9290);">avatar=yes cover=yes</div>
<div style="left:53px;top:915px;width:21px;height:21px;background:#005fb8;border-radius:4px"></div>
<svg style="position:absolute;left:53px;top:915px;overflow:visible" width="21" height="21" viewBox="0 0 21 21"><path d="M5.5 11l3.5 3 7-7" stroke="#fff" stroke-width="1.2" fill="none"/></svg>
<div class="t" style="left:117.50px;top:915.50px;font-size:20px;color:#000;transform:scaleX(0.8600);">4</div>
<div class="t" style="left:181.25px;top:915.50px;font-size:20px;color:#000;transform:scaleX(0.8587);">61557765848045</div>
<div class="t" style="left:357.50px;top:915.50px;font-size:20px;color:#000;transform:scaleX(0.9420);">Giáng Ngọc</div>
<div class="t" style="left:1925.00px;top:915.50px;font-size:20px;color:#000;transform:scaleX(0.9602);">Public</div>
<div class="t" style="left:2165.50px;top:915.50px;font-size:20px;color:#000;transform:scaleX(0.9290);">avatar=yes cover=yes</div>
<div style="left:560px;top:424px;width:1365px;height:728px;background:#f0f0f0"></div>
<div style="left:562px;top:432px;width:1361px;height:51px;background:#d3d3d3"></div>
<div style="left:562px;top:483px;width:1361px;height:2px;background:#808080"></div>
<div style="left:560px;top:424px;width:1365px;height:8px;background:#9400d3"></div>
<div style="left:560px;top:424px;width:2px;height:728px;background:#9400d3"></div>
<div style="left:1923px;top:424px;width:2px;height:728px;background:#9400d3"></div>
<div style="left:560px;top:1150px;width:1365px;height:2px;background:#9400d3"></div>
<svg style="position:absolute;left:562px;top:438px;overflow:visible" width="54" height="40" viewBox="0 0 54 40"><defs><linearGradient id="lg2" gradientUnits="userSpaceOnUse" x1="20" y1="38" x2="30" y2="5"><stop offset="0.05" stop-color="#ff2d3a"/><stop offset="0.6" stop-color="#9a30b0"/><stop offset="1" stop-color="#5535e0"/></linearGradient></defs><g stroke="url(#lg2)" stroke-width="8.6" stroke-linecap="round" fill="none"><line x1="5.8" y1="34.3" x2="19.1" y2="10.1"/><line x1="22.1" y1="30.6" x2="31.8" y2="15"/><line x1="34.2" y1="35.5" x2="48.7" y2="11.3"/></g><circle cx="37.2" cy="4.7" r="4.5" fill="#5535e0"/></svg>
<div class="t" style="left:1112.00px;top:449.00px;font-size:20px;font-weight:bold;color:#000;transform:scaleX(1.0789);">Cấu hình tạo page profile</div>
<div style="left:1879px;top:439px;width:38px;height:38px;background:#333;border-radius:7px"></div>
<svg style="position:absolute;left:1879px;top:439px;overflow:visible" width="38" height="38" viewBox="0 0 38 38"><path d="M13 13.5L25.5 26M25.5 13.5L13 26" stroke="#dcdcdc" stroke-width="4.3" stroke-linecap="round"/></svg>
<div style="left:569px;top:508px;width:670px;height:581px;box-sizing:border-box;border:1.5px solid #a9a9a9;border-radius:2px"></div>
<div style="left:581px;top:500px;width:87.6px;height:16px;background:#f0f0f0"></div>
<div class="t" style="left:583.00px;top:497.00px;font-size:20px;font-weight:bold;color:#000;transform:scaleX(0.9177);">Thông tin</div>
<div style="left:1244px;top:508px;width:669px;height:581px;box-sizing:border-box;border:1.5px solid #a9a9a9;border-radius:2px"></div>
<div style="left:1256px;top:500px;width:110.7px;height:16px;background:#f0f0f0"></div>
<div class="t" style="left:1258.00px;top:497.00px;font-size:20px;font-weight:bold;color:#000;transform:scaleX(0.9054);">Cài đặt khác</div>
<div style="left:587px;top:536px;width:21px;height:21px;background:#005fb8;border-radius:4px"></div>
<div style="left:593px;top:546px;width:9px;height:1.5px;background:#fff"></div>
<div class="t" style="left:615.00px;top:537.00px;font-size:20px;color:#000;transform:scaleX(0.9534);">Loại page muốn tạo</div>
<div style="left:862px;top:529px;width:362px;height:36px;background:#fdfdfd;border:1px solid #dedede;box-sizing:border-box;border-radius:3px;border-bottom-color:#c4c4c4"></div>
<div class="t" style="left:868.00px;top:537.00px;font-size:20px;color:#000;transform:scaleX(0.9340);">Page profile</div>
<svg style="position:absolute;left:1201px;top:541.0px;overflow:visible" width="16" height="12" viewBox="0 0 16 12"><path d="M2 3l6 6 6-6" stroke="#555" stroke-width="1.4" fill="none"/></svg>
<div style="left:587px;top:578px;width:21px;height:21px;background:#005fb8;border-radius:4px"></div>
<svg style="position:absolute;left:587px;top:578px;overflow:visible" width="21" height="21" viewBox="0 0 21 21"><path d="M5.5 11l3.5 3 7-7" stroke="#fff" stroke-width="1.2" fill="none"/></svg>
<div class="t" style="left:618.30px;top:578.20px;font-size:20px;color:#000;transform:scaleX(0.9453);">Tên trang (bắt buộc):</div>
<div style="left:863px;top:577px;width:359px;height:32px;background:#fdfdfd;border:1px solid #d2d2d2;box-sizing:border-box;border-radius:6px;box-shadow:0 1px 0 #c4c4c4;box-shadow:0 1px 0 #bdbdbd"></div>
<div class="t" style="left:999.20px;top:582.20px;font-size:20px;color:#000;transform:scaleX(0.9512);">Nhập (25)</div>
<div style="left:587px;top:621px;width:21px;height:21px;background:#005fb8;border-radius:4px"></div>
<svg style="position:absolute;left:587px;top:621px;overflow:visible" width="21" height="21" viewBox="0 0 21 21"><path d="M5.5 11l3.5 3 7-7" stroke="#fff" stroke-width="1.2" fill="none"/></svg>
<div class="t" style="left:618.30px;top:621.40px;font-size:20px;color:#000;transform:scaleX(0.9712);">Hạng mục (bắt buộc):</div>
<div style="left:863px;top:620px;width:359px;height:32px;background:#fdfdfd;border:1px solid #d2d2d2;box-sizing:border-box;border-radius:6px;box-shadow:0 1px 0 #c4c4c4;box-shadow:0 1px 0 #bdbdbd"></div>
<div class="t" style="left:999.20px;top:625.40px;font-size:20px;color:#000;transform:scaleX(0.9512);">Nhập (25)</div>
<div style="left:587px;top:665px;width:21px;height:21px;background:#005fb8;border-radius:4px"></div>
<svg style="position:absolute;left:587px;top:665px;overflow:visible" width="21" height="21" viewBox="0 0 21 21"><path d="M5.5 11l3.5 3 7-7" stroke="#fff" stroke-width="1.2" fill="none"/></svg>
<div class="t" style="left:618.30px;top:664.60px;font-size:20px;color:#000;transform:scaleX(0.8901);">Tiểu sử:</div>
<div style="left:863px;top:664px;width:359px;height:32px;background:#fdfdfd;border:1px solid #d2d2d2;box-sizing:border-box;border-radius:6px;box-shadow:0 1px 0 #c4c4c4;box-shadow:0 1px 0 #bdbdbd"></div>
<div class="t" style="left:999.20px;top:668.60px;font-size:20px;color:#000;transform:scaleX(0.9512);">Nhập (25)</div>
<div style="left:587px;top:708px;width:21px;height:21px;background:#005fb8;border-radius:4px"></div>
<svg style="position:absolute;left:587px;top:708px;overflow:visible" width="21" height="21" viewBox="0 0 21 21"><path d="M5.5 11l3.5 3 7-7" stroke="#fff" stroke-width="1.2" fill="none"/></svg>
<div class="t" style="left:618.30px;top:707.80px;font-size:20px;color:#000;transform:scaleX(0.9313);">Trang web:</div>
<div style="left:863px;top:707px;width:359px;height:32px;background:#fdfdfd;border:1px solid #d2d2d2;box-sizing:border-box;border-radius:6px;box-shadow:0 1px 0 #c4c4c4;box-shadow:0 1px 0 #bdbdbd"></div>
<div class="t" style="left:1006.50px;top:711.80px;font-size:20px;color:#000;transform:scaleX(0.8996);">Nhập (1)</div>
<div style="left:587px;top:751px;width:21px;height:21px;background:#005fb8;border-radius:4px"></div>
<svg style="position:absolute;left:587px;top:751px;overflow:visible" width="21" height="21" viewBox="0 0 21 21"><path d="M5.5 11l3.5 3 7-7" stroke="#fff" stroke-width="1.2" fill="none"/></svg>
<div class="t" style="left:618.30px;top:751.00px;font-size:20px;color:#000;transform:scaleX(0.9473);">Số điện thoại:</div>
<div style="left:863px;top:750px;width:359px;height:32px;background:#fdfdfd;border:1px solid #d2d2d2;box-sizing:border-box;border-radius:6px;box-shadow:0 1px 0 #c4c4c4;box-shadow:0 1px 0 #bdbdbd"></div>
<div class="t" style="left:1005.10px;top:755.00px;font-size:20px;color:#000;transform:scaleX(0.9356);">Nhập (3)</div>
<div style="left:587px;top:794px;width:21px;height:21px;background:#005fb8;border-radius:4px"></div>
<svg style="position:absolute;left:587px;top:794px;overflow:visible" width="21" height="21" viewBox="0 0 21 21"><path d="M5.5 11l3.5 3 7-7" stroke="#fff" stroke-width="1.2" fill="none"/></svg>
<div class="t" style="left:618.30px;top:794.20px;font-size:20px;color:#000;transform:scaleX(0.9125);">Email:</div>
<div style="left:863px;top:793px;width:359px;height:32px;background:#fdfdfd;border:1px solid #d2d2d2;box-sizing:border-box;border-radius:6px;box-shadow:0 1px 0 #c4c4c4;box-shadow:0 1px 0 #bdbdbd"></div>
<div class="t" style="left:1006.50px;top:798.20px;font-size:20px;color:#000;transform:scaleX(0.8996);">Nhập (1)</div>
<div style="left:587px;top:837px;width:21px;height:21px;background:#005fb8;border-radius:4px"></div>
<svg style="position:absolute;left:587px;top:837px;overflow:visible" width="21" height="21" viewBox="0 0 21 21"><path d="M5.5 11l3.5 3 7-7" stroke="#fff" stroke-width="1.2" fill="none"/></svg>
<div class="t" style="left:618.30px;top:837.40px;font-size:20px;color:#000;transform:scaleX(0.9417);">Địa chỉ:</div>
<div style="left:863px;top:836px;width:359px;height:32px;background:#fdfdfd;border:1px solid #d2d2d2;box-sizing:border-box;border-radius:6px;box-shadow:0 1px 0 #c4c4c4;box-shadow:0 1px 0 #bdbdbd"></div>
<div class="t" style="left:1000.65px;top:841.40px;font-size:20px;color:#000;transform:scaleX(0.9186);">Nhập (15)</div>
<div style="left:587px;top:881px;width:21px;height:21px;background:#005fb8;border-radius:4px"></div>
<svg style="position:absolute;left:587px;top:881px;overflow:visible" width="21" height="21" viewBox="0 0 21 21"><path d="M5.5 11l3.5 3 7-7" stroke="#fff" stroke-width="1.2" fill="none"/></svg>
<div class="t" style="left:618.30px;top:880.60px;font-size:20px;color:#000;transform:scaleX(0.9699);">Thành phố/Thị xã:</div>
<div style="left:863px;top:880px;width:359px;height:32px;background:#fdfdfd;border:1px solid #d2d2d2;box-sizing:border-box;border-radius:6px;box-shadow:0 1px 0 #c4c4c4;box-shadow:0 1px 0 #bdbdbd"></div>
<div class="t" style="left:1005.10px;top:884.60px;font-size:20px;color:#000;transform:scaleX(0.9356);">Nhập (2)</div>
<div style="left:587px;top:924px;width:21px;height:21px;background:#005fb8;border-radius:4px"></div>
<svg style="position:absolute;left:587px;top:924px;overflow:visible" width="21" height="21" viewBox="0 0 21 21"><path d="M5.5 11l3.5 3 7-7" stroke="#fff" stroke-width="1.2" fill="none"/></svg>
<div class="t" style="left:618.30px;top:923.80px;font-size:20px;color:#000;transform:scaleX(0.9540);">Mã zip:</div>
<div style="left:863px;top:923px;width:359px;height:32px;background:#fdfdfd;border:1px solid #d2d2d2;box-sizing:border-box;border-radius:6px;box-shadow:0 1px 0 #c4c4c4;box-shadow:0 1px 0 #bdbdbd"></div>
<div class="t" style="left:1006.50px;top:927.80px;font-size:20px;color:#000;transform:scaleX(0.8996);">Nhập (1)</div>
<div style="left:587px;top:967px;width:21px;height:21px;background:#005fb8;border-radius:4px"></div>
<svg style="position:absolute;left:587px;top:967px;overflow:visible" width="21" height="21" viewBox="0 0 21 21"><path d="M5.5 11l3.5 3 7-7" stroke="#fff" stroke-width="1.2" fill="none"/></svg>
<div class="t" style="left:618.30px;top:966.80px;font-size:20px;color:#000;transform:scaleX(0.8915);">Giờ mở cửa:</div>
<div style="left:862px;top:965px;width:362px;height:35px;background:#fdfdfd;border:1px solid #dedede;box-sizing:border-box;border-radius:3px;border-bottom-color:#c4c4c4"></div>
<div class="t" style="left:868.00px;top:972.50px;font-size:20px;color:#000;transform:scaleX(0.9407);">Luôn luôn mở cửa</div>
<svg style="position:absolute;left:1201px;top:976.5px;overflow:visible" width="16" height="12" viewBox="0 0 16 12"><path d="M2 3l6 6 6-6" stroke="#555" stroke-width="1.4" fill="none"/></svg>
<div style="left:587px;top:1010px;width:21px;height:21px;background:#005fb8;border-radius:4px"></div>
<svg style="position:absolute;left:587px;top:1010px;overflow:visible" width="21" height="21" viewBox="0 0 21 21"><path d="M5.5 11l3.5 3 7-7" stroke="#fff" stroke-width="1.2" fill="none"/></svg>
<div class="t" style="left:618.30px;top:1010.00px;font-size:20px;color:#000;transform:scaleX(0.9582);">Ảnh đại diện:</div>
<div style="left:862px;top:1008px;width:360px;height:35px;background:#fff;border-bottom:1.5px solid #8a8a8a;box-sizing:border-box"></div>
<div class="t" style="left:866.30px;top:1014.50px;font-size:20px;color:#000;transform:scaleX(0.9479);">D:\ảnh up avatar</div>
<div style="left:587px;top:1053px;width:21px;height:21px;background:#005fb8;border-radius:4px"></div>
<svg style="position:absolute;left:587px;top:1053px;overflow:visible" width="21" height="21" viewBox="0 0 21 21"><path d="M5.5 11l3.5 3 7-7" stroke="#fff" stroke-width="1.2" fill="none"/></svg>
<div class="t" style="left:618.30px;top:1053.00px;font-size:20px;color:#000;transform:scaleX(0.9338);">Ảnh bìa:</div>
<div style="left:862px;top:1051px;width:360px;height:35px;background:#fff;border-bottom:1.5px solid #8a8a8a;box-sizing:border-box"></div>
<div class="t" style="left:866.30px;top:1057.50px;font-size:20px;color:#000;transform:scaleX(0.9680);">D:\ảnh thu hà nội</div>
<div style="left:1250px;top:527px;width:657px;height:46px;box-sizing:border-box;border:1.5px solid #666;border-bottom-width:2px"></div>
<div class="t" style="left:1260.80px;top:541.50px;font-size:20px;color:#000;transform:scaleX(0.9425);">Khoảng cách tạo page</div>
<div style="left:1461px;top:535px;width:73px;height:31px;background:#fff;border:1.5px solid #b0b0b0;box-sizing:border-box"></div>
<div class="t" style="left:1464.50px;top:538.50px;font-size:20px;color:#000;transform:scaleX(0.8539);">15</div>
<div style="left:1510px;top:538px;width:21px;height:12.5px;background:#eeeeee;border:1px solid #c4c4c4;border-bottom:none;box-sizing:border-box"></div>
<div style="left:1510px;top:550.5px;width:21px;height:12.5px;background:#eeeeee;border:1px solid #c4c4c4;border-top:2px solid #c0c0c0;box-sizing:border-box"></div>
<svg style="position:absolute;left:1510px;top:538px;overflow:visible" width="21" height="25" viewBox="0 0 21 25"><path d="M6.5 9.0l4-4.5 4 4.5z M6.5 17.0l4 4.5 4-4.5z" fill="#111"/></svg>
<div class="t" style="left:1544.50px;top:541.50px;font-size:20px;color:#000;transform:scaleX(0.9199);">giây.</div>
<div style="left:1250px;top:578px;width:657px;height:43px;box-sizing:border-box;border:1.5px solid #666;border-bottom-width:2px"></div>
<div class="t" style="left:1260.80px;top:591.70px;font-size:20px;color:#000;transform:scaleX(0.9581);">Số lượng page muốn tạo trên mỗi tài khoản</div>
<div style="left:1643px;top:586px;width:73px;height:31px;background:#fff;border:1.5px solid #b0b0b0;box-sizing:border-box"></div>
<div class="t" style="left:1646.50px;top:589.50px;font-size:20px;color:#000;transform:scaleX(0.6292);">1</div>
<div style="left:1692px;top:589px;width:21px;height:12.5px;background:#eeeeee;border:1px solid #c4c4c4;border-bottom:none;box-sizing:border-box"></div>
<div style="left:1692px;top:601.5px;width:21px;height:12.5px;background:#eeeeee;border:1px solid #c4c4c4;border-top:2px solid #c0c0c0;box-sizing:border-box"></div>
<svg style="position:absolute;left:1692px;top:589px;overflow:visible" width="21" height="25" viewBox="0 0 21 25"><path d="M6.5 9.0l4-4.5 4 4.5z M6.5 17.0l4 4.5 4-4.5z" fill="#111"/></svg>
<div class="t" style="left:1727.00px;top:591.70px;font-size:20px;color:#000;transform:scaleX(0.9109);">page.</div>
<div style="left:1250px;top:626px;width:657px;height:453px;box-sizing:border-box;border:1.5px solid #666;border-bottom-width:2px"></div>
<div style="left:1261px;top:636px;width:21px;height:21px;background:#005fb8;border-radius:4px"></div>
<svg style="position:absolute;left:1261px;top:636px;overflow:visible" width="21" height="21" viewBox="0 0 21 21"><path d="M5.5 11l3.5 3 7-7" stroke="#fff" stroke-width="1.2" fill="none"/></svg>
<div class="t" style="left:1291.20px;top:635.00px;font-size:20px;color:#000;transform:scaleX(0.9406);">Tạo xong share quyền sang uid</div>
<div class="t" style="left:1280.60px;top:674.50px;font-size:20px;color:#000;transform:scaleX(0.9472);">Danh sách uid (0):</div>
<div style="left:1276px;top:704px;width:628px;height:243px;background:#fff;border-top:2px solid #6e6e6e;border-left:2px solid #6e6e6e;border-right:1px solid #e0e0e0;border-bottom:1px solid #e0e0e0;box-sizing:border-box"></div>
<div style="left:1285px;top:958px;width:20px;height:20px;background:#fff;border:1.5px solid #555;border-radius:4px;box-sizing:border-box"></div>
<div class="t" style="left:1315.10px;top:958.00px;font-size:20px;color:#000;transform:scaleX(0.9376);">Share quyền sang uid tạo page</div>
<div class="t" style="left:1285.20px;top:1005.00px;font-size:20px;color:#000;transform:scaleX(0.9747);">Một uid gửi tối đa</div>
<div style="left:1453px;top:1000px;width:73px;height:30px;background:#fff;border:1.5px solid #b0b0b0;box-sizing:border-box"></div>
<div class="t" style="left:1456.50px;top:1003.50px;font-size:20px;color:#000;transform:scaleX(0.8539);">10</div>
<div style="left:1502px;top:1003px;width:21px;height:12.0px;background:#eeeeee;border:1px solid #c4c4c4;border-bottom:none;box-sizing:border-box"></div>
<div style="left:1502px;top:1015.0px;width:21px;height:12.0px;background:#eeeeee;border:1px solid #c4c4c4;border-top:2px solid #c0c0c0;box-sizing:border-box"></div>
<svg style="position:absolute;left:1502px;top:1003px;overflow:visible" width="21" height="24" viewBox="0 0 21 24"><path d="M6.5 8.5l4-4.5 4 4.5z M6.5 16.5l4 4.5 4-4.5z" fill="#111"/></svg>
<div class="t" style="left:1540.50px;top:1005.00px;font-size:20px;color:#000;transform:scaleX(0.9628);">lời mời quản trị.</div>
<div class="t" style="left:1285.20px;top:1048.60px;font-size:20px;color:#000;transform:scaleX(0.9436);">Quyền truy cập :</div>
<div style="left:1441px;top:1042px;width:239px;height:34px;background:#fdfdfd;border:1px solid #dedede;box-sizing:border-box;border-radius:3px;border-bottom-color:#c4c4c4"></div>
<div class="t" style="left:1447.00px;top:1049.00px;font-size:20px;color:#000;transform:scaleX(0.9417);">Full quyền</div>
<svg style="position:absolute;left:1657px;top:1053.0px;overflow:visible" width="16" height="12" viewBox="0 0 16 12"><path d="M2 3l6 6 6-6" stroke="#555" stroke-width="1.4" fill="none"/></svg>
<div style="left:1075px;top:1100px;width:157px;height:40px;background:#3478e0"></div>
<div class="t" style="left:1137.25px;top:1110.00px;font-size:20px;font-weight:bold;color:#fff;transform:scaleX(0.8299);">Lưu</div>
<div style="left:1249px;top:1098px;width:161px;height:43px;background:#800000"></div>
<div class="t" style="left:1304.25px;top:1110.00px;font-size:20px;font-weight:bold;color:#fff;transform:scaleX(0.9297);">Đóng</div>
</body></html>
